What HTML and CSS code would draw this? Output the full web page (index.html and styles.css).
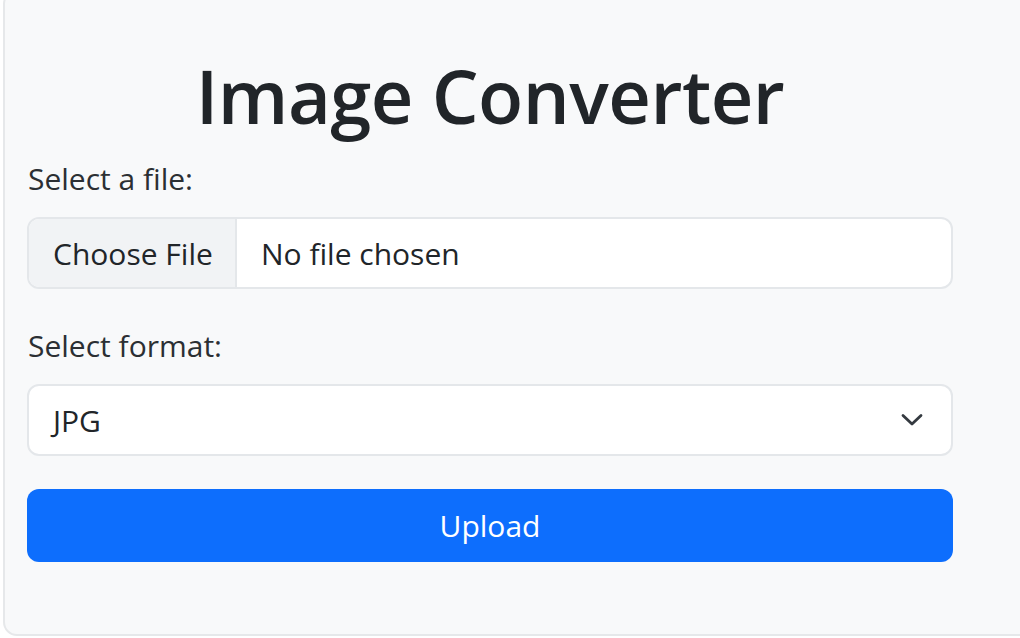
FILE: index.html
```html
<!DOCTYPE html>
<html lang="en">
<head>
<meta charset="utf-8">
<title>Image Converter</title>
<link rel="stylesheet" href="styles.css">
</head>
<body>
<div class="card">
  <h1 class="title">Image Converter</h1>
  <form class="form">
    <label class="label label-file">Select a file:</label>
    <div class="file-input">
      <span class="file-btn">Choose File</span>
      <span class="file-name">No file chosen</span>
    </div>
    <label class="label label-format">Select format:</label>
    <div class="select">
      <span class="select-value">JPG</span>
      <svg class="chevron" width="22" height="14" viewBox="0 0 22 14" aria-hidden="true">
        <path d="M2 2.5 L11 11 L20 2.5" fill="none" stroke="#343a40" stroke-width="2.8" stroke-linecap="round" stroke-linejoin="round"/>
      </svg>
    </div>
    <button type="button" class="upload">Upload</button>
  </form>
</div>
</body>
</html>
```

FILE: styles.css
```css
html, body {
  margin: 0;
  padding: 0;
  background: #ffffff;
  overflow: hidden;
}

body {
  font-family: "Open Sans", "Noto Sans", "Liberation Sans", sans-serif;
  color: #212529;
  height: 638px;
}

.card {
  margin-top: -10px;
  margin-left: 3px;
  width: 1060px;
  height: 646px;
  box-sizing: border-box;
  background: #f8f9fa;
  border: 2px solid #e6e8ea;
  border-radius: 14px;
  padding: 0 0 0 22px;
}

.title {
  margin: 58px 0 0 0;
  width: 926px;
  text-align: center;
  font-size: 74px;
  line-height: 91px;
  font-weight: 600;
  letter-spacing: -0.5px;
  color: #212529;
}

.form {
  width: 926px;
  display: flex;
  flex-direction: column;
}

.label {
  display: block;
  font-size: 30px;
  line-height: 45px;
  color: #2b2f33;
  padding-left: 1px;
}

.label-file {
  margin-top: 15px;
  margin-bottom: 16px;
}

.label-format {
  margin-top: 34px;
  margin-bottom: 16px;
}

.file-input {
  display: flex;
  height: 72px;
  box-sizing: border-box;
  border: 2px solid #e4e7ea;
  border-radius: 12px;
  background: #ffffff;
  overflow: hidden;
  font-size: 30px;
}

.file-btn {
  display: flex;
  align-items: center;
  width: 208px;
  box-sizing: border-box;
  padding-left: 24px;
  background: #f1f3f5;
  border-right: 2px solid #e4e7ea;
  color: #212529;
}

.file-name {
  display: flex;
  align-items: center;
  padding-left: 24px;
  color: #212529;
}

.select {
  display: flex;
  align-items: center;
  justify-content: space-between;
  height: 72px;
  box-sizing: border-box;
  border: 2px solid #e4e7ea;
  border-radius: 12px;
  background: #ffffff;
  padding: 0 28px 0 24px;
  font-size: 30px;
}

.chevron {
  display: block;
}

.upload {
  margin-top: 33px;
  height: 73px;
  border: none;
  border-radius: 12px;
  background: #0d6efd;
  color: #ffffff;
  font-family: inherit;
  font-size: 30px;
  cursor: pointer;
}
```
